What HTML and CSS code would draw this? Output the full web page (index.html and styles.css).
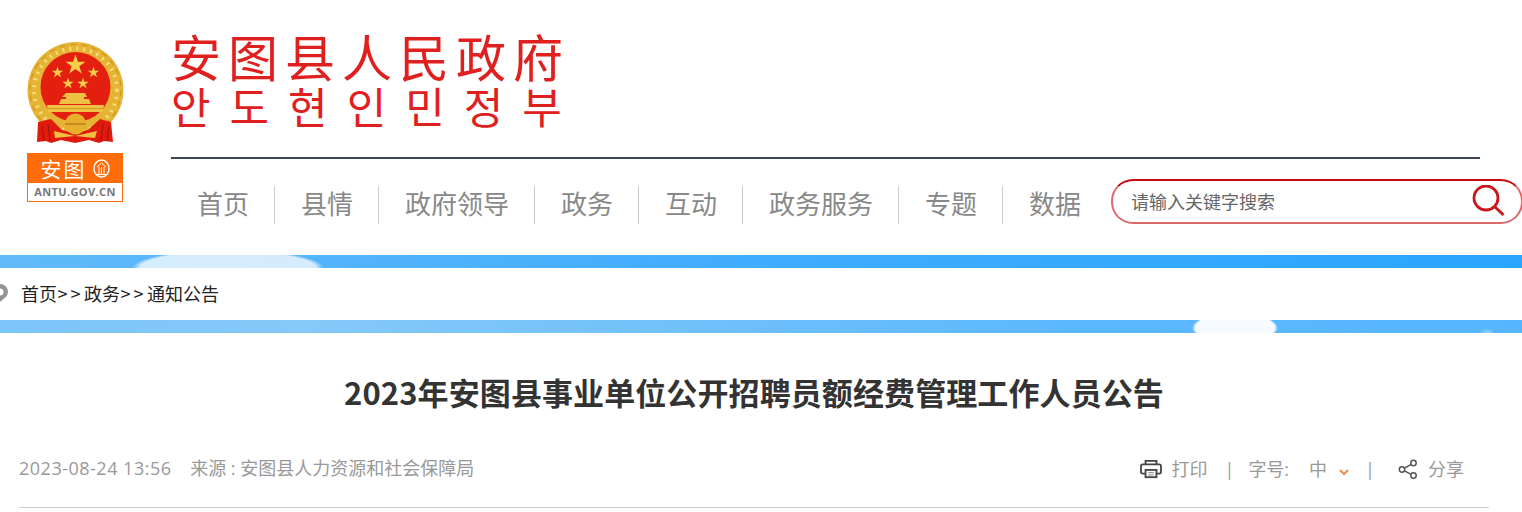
FILE: index.html
```html
<!DOCTYPE html>
<html lang="zh-CN">
<head>
    <meta charset="UTF-8">
    <meta name="viewport" content="width=device-width, initial-scale=1.0">
    <title>2023年安图县事业单位公开招聘员额经费管理工作人员公告</title>
    <link rel="stylesheet" href="styles.css">
</head>
<body>
    <!-- Header -->
    <div class="header">
        <div class="logo">
            <svg class="emblem" width="98" height="102" viewBox="27 42 98 102">
                <defs>
                    <polygon id="star" points="0,-1 .225,-.309 .951,-.309 .363,.118 .588,.809 0,.382 -.588,.809 -.363,.118 -.951,-.309 -.225,-.309"/>
                </defs>
                <circle cx="75.500" cy="90" r="48" fill="#e6b434"/>
                <circle cx="75.500" cy="90" r="41.500" fill="none" stroke="#f7dc7c" stroke-width="4" stroke-dasharray="2 5"/>
                <circle cx="75.500" cy="90" r="45.500" fill="none" stroke="#cf9622" stroke-width="1.200" stroke-dasharray="6 5"/>
                <circle cx="75.500" cy="87" r="35" fill="#e3200f"/>
                <use href="#star" transform="translate(75.500 65) scale(10.500)" fill="#f6cf4a"/>
                <use href="#star" transform="translate(57.500 72.500) scale(6)" fill="#f6cf4a"/>
                <use href="#star" transform="translate(93.500 72.500) scale(6)" fill="#f6cf4a"/>
                <use href="#star" transform="translate(68 83.500) scale(6)" fill="#f6cf4a"/>
                <use href="#star" transform="translate(83 83.500) scale(6)" fill="#f6cf4a"/>
                <path d="M66 93h19l2 4h-3v2h5l2 5h-32l2-5h5v-2h-4z" fill="#eec043"/>
                <path d="M47 105h57l-1 7h-55z" fill="#eec043"/>
                <path d="M47 108.500h57" stroke="#d29624" stroke-width="1"/>
                <path d="M38 122l13-3 11 11 13 3 13-3 12-11 11 3 2 20-9-1-5 2-10-3-14 3-14-3-10 3-5-2-9 1z" fill="#e11a0e"/>
                <path d="M42 126l2 15M48 124l2 17M103 124l-2 17M109 126l-2 15" stroke="#a50f08" stroke-width="1"/>
                <circle cx="75.500" cy="124" r="10.500" fill="#e7b02c"/>
                <path d="M65 124h21" stroke="#bb7f1d" stroke-width="1.500"/>
                <path d="M54 131l21 5 22-5-2 7-20-2-20 2z" fill="#eec043"/>
            </svg>
            <div class="badge">
                <div class="badge-top">
                    <span>安图</span>
                    <svg width="17" height="19" viewBox="0 0 17 19">
                        <ellipse cx="8.500" cy="9.500" rx="7.500" ry="8.500" fill="none" stroke="#fff" stroke-width="1.400"/>
                        <path d="M4 8l4.500-4 4.500 4M6 8v7M8.500 8v7M11 8v7M4 15.500h9" fill="none" stroke="#fff" stroke-width="1"/>
                    </svg>
                </div>
                <div class="badge-url">ANTU.GOV.CN</div>
            </div>
        </div>
        <div class="header-main">
            <div class="site-name">安图县人民政府</div>
            <div class="site-name-kr">안도현인민정부</div>
            <div class="nav-row">
                <div class="nav">
                    <a class="nav-item">首页</a>
                    <a class="nav-item">县情</a>
                    <a class="nav-item">政府领导</a>
                    <a class="nav-item">政务</a>
                    <a class="nav-item">互动</a>
                    <a class="nav-item">政务服务</a>
                    <a class="nav-item">专题</a>
                    <a class="nav-item">数据</a>
                </div>
                <div class="search">
                    <input type="text" class="search-input" placeholder="请输入关键字搜索">
                    <svg width="34" height="32" viewBox="0 0 34 32">
                        <circle cx="15" cy="13" r="12" fill="none" stroke="#c9181b" stroke-width="2.800"/>
                        <path d="M23.500 21.500l9 8.500" stroke="#c9181b" stroke-width="3"/>
                    </svg>
                </div>
            </div>
        </div>
    </div>

    <!-- Breadcrumb -->
    <div class="band band-top"></div>
    <div class="crumbs">
        <svg class="pin" width="16" height="18" viewBox="0 0 16 18">
            <path d="M8 0a8 8 0 0 1 8 8c0 4-4.500 7-8 10c-3.500-3-8-6-8-10a8 8 0 0 1 8-8z" fill="#949494"/>
            <circle cx="8" cy="8" r="3.500" fill="#fff"/>
        </svg>
        <span>首页</span><span class="sep">&gt;&gt;</span><span>政务</span><span class="sep">&gt;&gt;</span><span>通知公告</span>
    </div>
    <div class="band band-bottom"></div>

    <!-- Article head -->
    <div class="article">
        <h1 class="article-title">2023年安图县事业单位公开招聘员额经费管理工作人员公告</h1>
        <div class="meta">
            <div class="meta-left">
                <span class="date">2023-08-24 13:56</span>
                <span>来源 : 安图县人力资源和社会保障局</span>
            </div>
            <div class="tools">
                <svg class="tool-print" width="22" height="20" viewBox="0 0 24 22">
                    <path d="M6 6V2h12v4" fill="none" stroke="#444" stroke-width="2"/>
                    <path d="M6 16H3a2 2 0 0 1-2-2V8a2 2 0 0 1 2-2h18a2 2 0 0 1 2 2v6a2 2 0 0 1-2 2h-3" fill="none" stroke="#444" stroke-width="2"/>
                    <rect x="6" y="12" width="12" height="8" fill="none" stroke="#444" stroke-width="2"/>
                    <path d="M9 15h6M9 17.500h6" stroke="#777" stroke-width="1"/>
                </svg>
                <span class="tool-print-text">打印</span>
                <span class="bar">|</span>
                <span class="font-label">字号:</span>
                <span class="font-size">中</span>
                <svg class="chevron" width="12" height="8" viewBox="0 0 12 8">
                    <path d="M2 2l4 4 4-4" fill="none" stroke="#f58b4c" stroke-width="2"/>
                </svg>
                <span class="bar bar-two">|</span>
                <svg class="tool-share" width="20" height="20" viewBox="0 0 20 20">
                    <circle cx="15.500" cy="4" r="2.700" fill="none" stroke="#555" stroke-width="1.500"/>
                    <circle cx="4" cy="10.500" r="2.700" fill="none" stroke="#555" stroke-width="1.500"/>
                    <circle cx="15.500" cy="16.500" r="2.700" fill="none" stroke="#555" stroke-width="1.500"/>
                    <path d="M6.400 9.200l6.800-3.900M6.400 11.800l6.800 3.500" stroke="#555" stroke-width="1.500"/>
                </svg>
                <span>分享</span>
            </div>
        </div>
    </div>
</body>
</html>
```

FILE: styles.css
```css
* {
    margin: 0;
    padding: 0;
    box-sizing: border-box;
}

html, body {
    height: 512px;
    overflow: hidden;
}

body {
    background: #fff;
    font-family: "Noto Sans CJK SC", "Liberation Sans", sans-serif;
}

.header {
    display: flex;
    height: 255px;
}

.logo {
    flex: none;
    width: 96px;
    margin: 42px 0 0 27px;
}

.emblem {
    display: block;
}

.badge {
    width: 96px;
    height: 49px;
    margin-top: 9px;
    padding: 0 1px 1px;
    background: #ff6d0a;
}

.badge-top {
    display: flex;
    align-items: center;
    justify-content: center;
    gap: 6px;
    height: 30px;
    color: #fff;
    font-size: 21px;
    letter-spacing: 2px;
    line-height: 30px;
}

.badge-url {
    height: 18px;
    background: #fff;
    color: #777;
    font-family: "Open Sans", sans-serif;
    font-size: 11px;
    font-weight: 700;
    letter-spacing: .4px;
    line-height: 18px;
    text-align: center;
}

.header-main {
    flex: none;
    width: 1309px;
    margin-left: 48px;
}

.site-name {
    height: 50px;
    margin-top: 30px;
    color: #e0201f;
    font-size: 50px;
    letter-spacing: 7px;
    line-height: 50px;
}

.site-name-kr {
    height: 79px;
    border-bottom: 2px solid #3b4759;
    color: #e0201f;
    font-family: "Noto Sans CJK KR", sans-serif;
    font-size: 43px;
    letter-spacing: 19px;
    line-height: 50px;
}

.nav-row {
    display: flex;
    width: 1352px;
    margin-top: 20px;
}

.nav {
    display: flex;
    flex: none;
    width: 940px;
    padding-top: 7px;
}

.nav-item {
    height: 38px;
    padding: 0 25px 0 26px;
    border-right: 1px solid #ccc;
    color: #888;
    font-size: 26px;
    line-height: 34px;
    white-space: nowrap;
}

.nav-item:last-child {
    border-right: none;
}

.search {
    display: flex;
    flex: none;
    align-items: center;
    width: 412px;
    height: 45px;
    padding: 0 16px 2px 18px;
    border: 2px solid #dc6a6d;
    border-top-color: #c90a0f;
    border-radius: 22px;
}

.search-input {
    flex: 1;
    border: none;
    outline: none;
    background: none;
    font-family: inherit;
    font-size: 18px;
}

.search-input::placeholder {
    color: #666;
    opacity: 1;
}

.band {
    height: 13px;
}

.band-top {
    background:
        radial-gradient(ellipse 117px 22px at 228px 13px, rgba(255, 255, 255, .75) 75%, rgba(255, 255, 255, 0) 82%),
        linear-gradient(90deg, #62bafa, #40acfd 50%, #2aa6fe);
}

.band-bottom {
    background:
        radial-gradient(ellipse 55px 20px at 1235px 8px, rgba(255, 255, 255, .95) 72%, rgba(255, 255, 255, 0) 78%),
        radial-gradient(ellipse 8px 6px at 1487px 14px, rgba(255, 255, 255, .5), rgba(255, 255, 255, 0)),
        linear-gradient(90deg, #7cc5f9, #85c9f8 20%, #5cb8fd 70%, #55b6fe);
}

.crumbs {
    display: flex;
    align-items: center;
    height: 52px;
    padding-bottom: 3px;
    color: #222;
    font-size: 18px;
}

.pin {
    flex: none;
    margin: 0 13px 0 -8px;
}

.sep {
    width: 27px;
    letter-spacing: 3px;
    text-align: center;
}

.article {
    padding: 0 33px 0 19px;
}

.article-title {
    height: 77px;
    padding-top: 35px;
    color: #333;
    font-size: 31px;
    font-weight: 700;
    letter-spacing: .1px;
    line-height: 48px;
    text-align: center;
    box-sizing: content-box;
}

.meta {
    display: flex;
    justify-content: space-between;
    height: 63px;
    padding-top: 10px;
    border-bottom: 1px solid #ccc;
    color: #999;
    font-family: "Open Sans", "Noto Sans CJK SC", sans-serif;
    font-size: 18px;
    line-height: 26px;
}

.date {
    margin-right: 14px;
    letter-spacing: .5px;
}

.tools {
    display: flex;
    align-items: center;
    height: 26px;
    margin-top: 1px;
    padding-right: 25px;
}

.tool-print {
    margin-right: 9px;
}

.tool-print-text {
    margin-right: 17px;
}

.bar {
    margin-right: 14px;
}

.bar-two {
    margin-right: 23px;
}

.font-label {
    margin-right: 20px;
}

.font-size {
    margin-right: 11px;
}

.chevron {
    margin: 5px 15px 0 0;
}

.tool-share {
    margin-right: 10px;
}
```
